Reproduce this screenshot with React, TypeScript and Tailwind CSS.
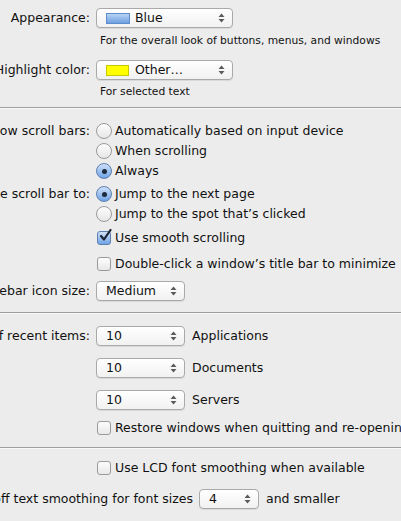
import type { ReactNode } from 'react'

const font = { fontFamily: '"DejaVu Sans", "Liberation Sans", sans-serif' }

function Arrows() {
  return (
    <svg width="7" height="10" viewBox="0 0 7 10" className="shrink-0">
      <path d="M3.5 0.5 L6.5 4 L0.5 4 Z" fill="#5a5a5a" />
      <path d="M3.5 9.5 L6.5 6 L0.5 6 Z" fill="#5a5a5a" />
    </svg>
  )
}

function Popup({ width, swatch, children }: { width: string; swatch?: string; children: ReactNode }) {
  return (
    <div
      className={`${width} flex h-[20px] shrink-0 items-center rounded-[4px] border border-[#a9a9a9] bg-gradient-to-b from-[#ffffff] to-[#f1f1f1] pl-[9px] pr-[7px] shadow-[0_1px_0_rgba(0,0,0,0.08)]`}
    >
      {swatch === 'blue' && (
        <span className="mr-[5px] h-[11px] w-[24px] border border-[#5d8ccc] bg-gradient-to-b from-[#b9d3f3] to-[#6d9fe0]" />
      )}
      {swatch === 'yellow' && <span className="mr-[6px] h-[11px] w-[23px] border border-[#c9c900] bg-[#ffff00]" />}
      <span className="flex-1 text-[12.5px] text-[#111]">{children}</span>
      <Arrows />
    </div>
  )
}

function Radio({ on }: { on?: boolean }) {
  if (on) {
    return (
      <span className="flex h-[16px] w-[16px] shrink-0 items-center justify-center rounded-full border border-[#5d7fb0] bg-gradient-to-b from-[#cfe1f8] to-[#6fa3e6]">
        <span className="h-[5px] w-[5px] rounded-full bg-[#1d2a3c]" />
      </span>
    )
  }
  return (
    <span className="h-[16px] w-[16px] shrink-0 rounded-full border border-[#9a9a9a] bg-gradient-to-b from-[#fdfdfd] to-[#e6e6e6]" />
  )
}

function Check({ on }: { on?: boolean }) {
  if (on) {
    return (
      <span className="relative flex h-[14px] w-[14px] shrink-0 items-center justify-center rounded-[3px] border border-[#5d7fb0] bg-gradient-to-b from-[#cfe1f8] to-[#6fa3e6]">
        <svg width="13" height="13" viewBox="0 0 13 13" className="absolute -top-[3px] left-[1px]">
          <path d="M2 7 L5 10.5 L11.5 1" fill="none" stroke="#1b2433" strokeWidth="2.2" strokeLinecap="round" strokeLinejoin="round" />
        </svg>
      </span>
    )
  }
  return (
    <span className="h-[14px] w-[14px] shrink-0 rounded-[3px] border border-[#9a9a9a] bg-gradient-to-b from-[#fdfdfd] to-[#e8e8e8]" />
  )
}

function Label({ children, width = 'w-[96px]' }: { children?: ReactNode; width?: string }) {
  return (
    <div className={`${width} flex shrink-0 justify-end whitespace-nowrap pr-[6px] text-[12.5px] text-[#111]`}>
      {children}
    </div>
  )
}

function Row({ className = '', children }: { className?: string; children: ReactNode }) {
  return <div className={`flex h-[20px] items-center whitespace-nowrap ${className}`}>{children}</div>
}

function Separator({ className = '' }: { className?: string }) {
  return <div className={`h-px w-full bg-[#9f9f9f] shadow-[0_1px_0_#f8f8f8] ${className}`} />
}

export default function App() {
  return (
    <div className="h-[521px] w-[401px] overflow-hidden bg-[#ececec]" style={font}>
      <div className="flex flex-col pt-[8px]">
        <Row>
          <Label>Appearance:</Label>
          <Popup width="w-[137px]" swatch="blue">Blue</Popup>
        </Row>
        <div className="mt-[5px] flex h-[16px] items-center pl-[100px] text-[10.7px] text-[#111]">
          For the overall look of buttons, menus, and windows
        </div>
        <Row className="mt-[11px]">
          <Label>Highlight color:</Label>
          <Popup width="w-[137px]" swatch="yellow">Other…</Popup>
        </Row>
        <div className="mt-[4px] flex h-[16px] items-center pl-[100px] text-[10.7px] text-[#111]">
          For selected text
        </div>

        <Separator className="mt-[7px]" />

        <Row className="mt-[13px]">
          <Label>Show scroll bars:</Label>
          <Radio />
          <span className="ml-[3px] text-[12.5px] text-[#111]">Automatically based on input device</span>
        </Row>
        <Row>
          <Label />
          <Radio />
          <span className="ml-[3px] text-[12.5px] text-[#111]">When scrolling</span>
        </Row>
        <Row>
          <Label />
          <Radio on />
          <span className="ml-[3px] text-[12.5px] text-[#111]">Always</span>
        </Row>
        <Row className="mt-[3px]">
          <Label>Click in the scroll bar to:</Label>
          <Radio on />
          <span className="ml-[3px] text-[12.5px] text-[#111]">Jump to the next page</span>
        </Row>
        <Row>
          <Label />
          <Radio />
          <span className="ml-[3px] text-[12.5px] text-[#111]">Jump to the spot that’s clicked</span>
        </Row>
        <Row className="mt-[4px]">
          <Label />
          <span className="ml-[1px]" />
          <Check on />
          <span className="ml-[4px] text-[12.5px] text-[#111]">Use smooth scrolling</span>
        </Row>
        <Row className="mt-[6px]">
          <Label />
          <span className="ml-[1px]" />
          <Check />
          <span className="ml-[4px] text-[12.5px] text-[#111]">Double-click a window’s title bar to minimize</span>
        </Row>
        <Row className="mt-[7px]">
          <Label>Sidebar icon size:</Label>
          <Popup width="w-[89px]">Medium</Popup>
        </Row>

        <Separator className="mt-[11px]" />

        <Row className="mt-[13px]">
          <Label>Number of recent items:</Label>
          <Popup width="w-[89px]">10</Popup>
          <span className="ml-[7px] text-[12.5px] text-[#111]">Applications</span>
        </Row>
        <Row className="mt-[12px]">
          <Label />
          <Popup width="w-[89px]">10</Popup>
          <span className="ml-[7px] text-[12.5px] text-[#111]">Documents</span>
        </Row>
        <Row className="mt-[12px]">
          <Label />
          <Popup width="w-[89px]">10</Popup>
          <span className="ml-[7px] text-[12.5px] text-[#111]">Servers</span>
        </Row>
        <Row className="mt-[8px]">
          <Label />
          <span className="ml-[1px]" />
          <Check />
          <span className="ml-[4px] text-[12.5px] text-[#111]">Restore windows when quitting and re-opening apps</span>
        </Row>

        <Separator className="mt-[9px]" />

        <Row className="mt-[10px]">
          <Label />
          <span className="ml-[1px]" />
          <Check />
          <span className="ml-[4px] text-[12.5px] text-[#111]">Use LCD font smoothing when available</span>
        </Row>
        <Row className="mt-[11px]">
          <Label width="w-[199px]">Turn off text smoothing for font sizes</Label>
          <Popup width="w-[60px]">4</Popup>
          <span className="ml-[7px] text-[12.5px] text-[#111]">and smaller</span>
        </Row>
      </div>
    </div>
  )
}
